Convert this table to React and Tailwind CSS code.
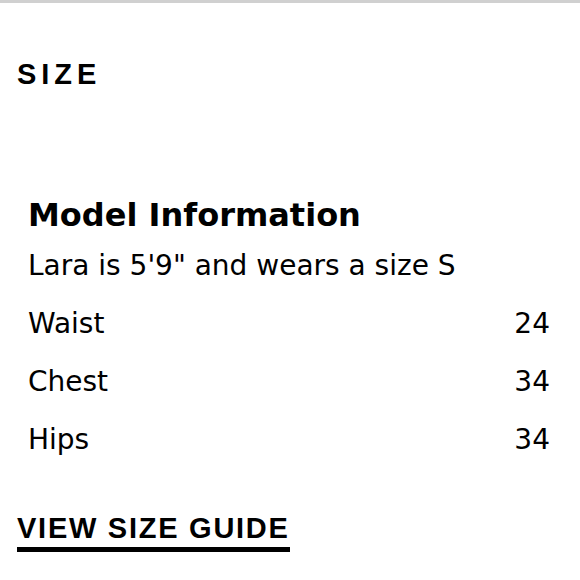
export default function App() {
  const rows = [
    { label: "Waist", value: "24" },
    { label: "Chest", value: "34" },
    { label: "Hips", value: "34" },
  ];

  return (
    <div className="w-[580px] h-[580px] bg-white border-t-[3px] border-[#d0d0d0] overflow-hidden text-black">
      <h2 className="pl-[17px] pt-[55px] text-[29px] leading-[32px] font-bold tracking-[0.17em] font-['Liberation_Sans',sans-serif]">
        SIZE
      </h2>

      <div className="pl-[28px] pr-[30px] pt-[107px] font-['DejaVu_Sans',sans-serif]">
        <h3 className="text-[32px] leading-[36px] font-bold">Model Information</h3>
        <p className="mt-[17px] text-[28px] leading-[32px]">Lara is 5'9" and wears a size S</p>
        <div className="mt-[26px] flex flex-col gap-[26px]">
          {rows.map((r) => (
            <div key={r.label} className="flex justify-between text-[28px] leading-[32px]">
              <span>{r.label}</span>
              <span>{r.value}</span>
            </div>
          ))}
        </div>
      </div>

      <a
        href="#"
        className="block w-fit ml-[17px] mt-[57px] text-[29px] leading-[30px] font-bold tracking-[0.06em] font-['Liberation_Sans',sans-serif] border-b-[5px] border-black pb-[4px]"
      >
        VIEW SIZE GUIDE
      </a>
    </div>
  );
}
